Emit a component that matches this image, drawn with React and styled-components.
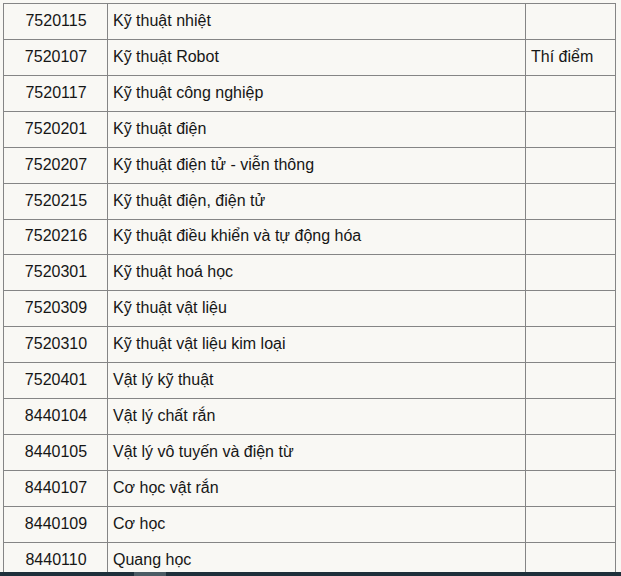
import React from 'react'
import styled, { createGlobalStyle } from 'styled-components'

const GlobalStyle = createGlobalStyle`
  html, body {
    margin: 0;
    padding: 0;
    background: #f9f8f4;
    overflow: hidden;
  }
`

const Page = styled.div`
  width: 621px;
  height: 576px;
  padding: 3px 0 0 3px;
  box-sizing: border-box;
  overflow: hidden;
  font-family: "Liberation Sans", Arial, sans-serif;
  color: #161616;
`

const Table = styled.table`
  border-collapse: collapse;
  width: 612px;
  table-layout: fixed;
  font-size: 16px;
`

const Row = styled.tr`
  height: 35.93px;
`

const Cell = styled.td`
  border: 1px solid #858585;
  padding: 0 4px 1px 5px;
  vertical-align: middle;
  text-align: ${p => (p.$center ? 'center' : 'left')};
  white-space: nowrap;
`

const ScrollBar = styled.div`
  position: fixed;
  left: 0;
  right: 0;
  bottom: 0;
  height: 4px;
  background: #1e2f3a;
  display: flex;
  padding-left: 134px;
`

const Thumb = styled.div`
  width: 32px;
  height: 100%;
  background: #4b5b64;
`

const rows = [
  ['7520115', 'Kỹ thuật nhiệt', ''],
  ['7520107', 'Kỹ thuật Robot', 'Thí điểm'],
  ['7520117', 'Kỹ thuật công nghiệp', ''],
  ['7520201', 'Kỹ thuật điện', ''],
  ['7520207', 'Kỹ thuật điện tử - viễn thông', ''],
  ['7520215', 'Kỹ thuật điện, điện tử', ''],
  ['7520216', 'Kỹ thuật điều khiển và tự động hóa', ''],
  ['7520301', 'Kỹ thuật hoá học', ''],
  ['7520309', 'Kỹ thuật vật liệu', ''],
  ['7520310', 'Kỹ thuật vật liệu kim loại', ''],
  ['7520401', 'Vật lý kỹ thuật', ''],
  ['8440104', 'Vật lý chất rắn', ''],
  ['8440105', 'Vật lý vô tuyến và điện từ', ''],
  ['8440107', 'Cơ học vật rắn', ''],
  ['8440109', 'Cơ học', ''],
  ['8440110', 'Quang học', ''],
]

export default function App() {
  return (
    <Page>
      <GlobalStyle />
      <Table>
        <colgroup>
          <col style={{ width: 104 }} />
          <col style={{ width: 418 }} />
          <col style={{ width: 90 }} />
        </colgroup>
        <tbody>
          {rows.map(([code, name, note]) => (
            <Row key={code}>
              <Cell $center>{code}</Cell>
              <Cell>{name}</Cell>
              <Cell>{note}</Cell>
            </Row>
          ))}
        </tbody>
      </Table>
      <ScrollBar>
        <Thumb />
      </ScrollBar>
    </Page>
  )
}
